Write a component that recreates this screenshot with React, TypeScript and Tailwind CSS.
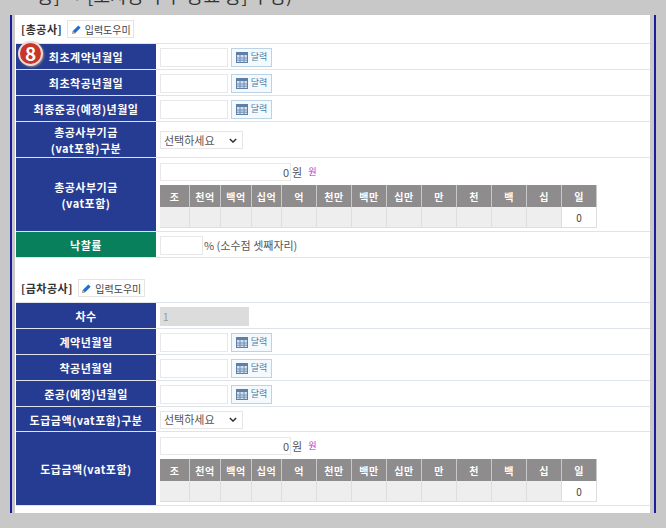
const ff = "font-['Noto_Sans_CJK_KR','Noto_Sans',sans-serif]";

function Pencil({ className }: { className: string }) {
  return (
    <svg viewBox="0 0 12 12" className={className}>
      <path d="M1 11 L2 7.5 L8 1.5 L10.5 4 L4.5 10 Z" fill="#1d6fd0" />
      <path d="M1 11 L2 7.5 L4.5 10 Z" fill="#e8b060" />
    </svg>
  );
}

function Helper() {
  return (
    <span className="ml-[5px] flex h-[18px] w-[67px] items-center justify-center gap-[3px] border border-[#e4e4e4] bg-white text-[10px] font-normal tracking-normal text-[#444]">
      <Pencil className="h-[11px] w-[11px]" />
      입력도우미
    </span>
  );
}

function Label({ children, green }: { children: React.ReactNode; green?: boolean }) {
  return (
    <div
      className={`flex w-[140px] shrink-0 items-center justify-center pt-[1px] text-center text-[11px] font-bold leading-[16px] tracking-[0.5px] text-white ${green ? "bg-[#08805c]" : "bg-[#263c92]"}`}
    >
      <div>{children}</div>
    </div>
  );
}

function Row({ label, green, h, children }: { label: React.ReactNode; green?: boolean; h: string; children: React.ReactNode }) {
  return (
    <div className={`flex border-b border-[#dfe3ea] ${h}`}>
      <Label green={green}>{label}</Label>
      <div className="flex min-w-0 flex-1 flex-col justify-center pl-[4px] pt-[1px]">{children}</div>
    </div>
  );
}

function DateField() {
  return (
    <div className="flex items-center">
      <div className="h-[19px] w-[68px] border border-[#e8e8e8] bg-white" />
      <span className="ml-[3px] flex h-[19px] w-[41px] items-center justify-center gap-[3px] border border-[#bcd3e6] bg-[#f4f9fd] text-[9px] text-[#4a7fa8]">
        <svg viewBox="0 0 12 11" className="h-[11px] w-[12px]">
          <rect x="0.5" y="0.5" width="11" height="10" fill="#cfe0f0" stroke="#5f7fa8" />
          <rect x="0.5" y="0.5" width="11" height="2.5" fill="#5f7fa8" />
          <path d="M4 3v7M8 3v7M1 6h10M1 8.2h10" stroke="#5f7fa8" strokeWidth="0.8" />
        </svg>
        달력
      </span>
    </div>
  );
}

function SelectBox() {
  return (
    <div className="flex h-[18px] w-[83px] items-center justify-between border border-[#e6e6e6] bg-white pl-[3px] pr-[5px] text-[11px] text-[#555]">
      선택하세요
      <svg viewBox="0 0 10 6" className="h-[5px] w-[8px]">
        <path d="M1 1l4 4 4-4" fill="none" stroke="#333" strokeWidth="1.8" />
      </svg>
    </div>
  );
}

const cols: [string, string][] = [
  ["조", "w-[30px]"],
  ["천억", "w-[31px]"],
  ["백억", "w-[31px]"],
  ["십억", "w-[30px]"],
  ["억", "w-[35px]"],
  ["천만", "w-[35px]"],
  ["백만", "w-[35px]"],
  ["십만", "w-[35px]"],
  ["만", "w-[35px]"],
  ["천", "w-[35px]"],
  ["백", "w-[35px]"],
  ["십", "w-[35px]"],
  ["일", "w-[35px]"],
];

function Amount() {
  return (
    <div className="mt-[1px] flex flex-col">
      <div className="flex h-[18px] items-center text-[11px] text-[#555]">
        <div className="flex h-[18px] w-[131px] items-center justify-end border border-[#e8e8e8] bg-white pr-[1px]">0</div>
        <span className="ml-[1px]">원</span>
        <span className="ml-[6px] text-[9px] text-[#b32cd0]">원</span>
      </div>
      <div className="mt-[4px] flex w-[438px]">
        {cols.map(([name, w], i) => (
          <div key={name} className={`flex flex-col ${w} shrink-0`}>
            <div className="flex h-[22px] items-center justify-center border-r border-[#c8c8c8] bg-[#8e8c8c] text-[10px] font-bold tracking-[0.5px] text-white">
              {name}
            </div>
            <div
              className={`flex h-[21px] items-center justify-center border-b border-r border-[#dedede] text-[10px] text-[#444] ${i === 12 ? "bg-white" : "bg-[#eeeeee]"}`}
            >
              {i === 12 ? "0" : ""}
            </div>
          </div>
        ))}
      </div>
    </div>
  );
}

export default function App() {
  return (
    <div className={`${ff} h-[528px] w-[666px] overflow-hidden bg-[#c8c8c8]`}>
      <div className="flex h-[15px] items-end overflow-hidden whitespace-nowrap pl-[37px] text-[18px] leading-[22px] tracking-[0.3px] text-[#333]">
        <span className="mb-[9px]">용] → [조사공식 주 공표 등] 구성)</span>
      </div>
      <div className="ml-[10px] flex h-[498px] w-[646px] border-x-2 border-[#1c1c9c] bg-[#c8c8c8]">
        <div className="ml-[3px] w-[635px] bg-white pl-[1px]">
          <div className="flex h-[28px] items-center pl-[5px] text-[11px] font-bold tracking-[0.5px] text-[#333]">
            [총공사]
            <Helper />
          </div>
          <div className="relative border-t border-[#dfe3ea]">
            <div className="absolute left-[2px] top-[-3px] z-10 flex h-[25px] w-[25px] items-center justify-center rounded-full border-2 border-[#f4d8d0] bg-[#c8352a] text-[19px] font-bold text-white shadow-[1px_1px_2px_#888]">
              8
            </div>
            <Row label="최초계약년월일" h="h-[26px]"><DateField /></Row>
            <Row label="최초착공년월일" h="h-[26px]"><DateField /></Row>
            <Row label="최종준공(예정)년월일" h="h-[26px]"><DateField /></Row>
            <Row label={<>총공사부기금<br />(vat포함)구분</>} h="h-[36px]"><SelectBox /></Row>
            <Row label={<>총공사부기금<br />(vat포함)</>} h="h-[74px]"><Amount /></Row>
            <Row label="낙찰률" green h="h-[26px]">
              <div className="flex items-center text-[11px] text-[#555]">
                <div className="h-[19px] w-[43px] border border-[#e8e8e8] bg-white" />
                <span className="ml-[1px]">% (소수점 셋째자리)</span>
              </div>
            </Row>
          </div>
          <div className="h-[16px]" />
          <div className="flex h-[28px] items-center pl-[5px] text-[11px] font-bold tracking-[0.5px] text-[#333]">
            [금차공사]
            <Helper />
          </div>
          <div className="border-t border-[#dfe3ea]">
            <Row label="차수" h="h-[26px]">
              <div className="flex h-[19px] w-[89px] items-center bg-[#dcdcdc] pl-[3px] text-[10px] text-[#999]">1</div>
            </Row>
            <Row label="계약년월일" h="h-[26px]"><DateField /></Row>
            <Row label="착공년월일" h="h-[26px]"><DateField /></Row>
            <Row label="준공(예정)년월일" h="h-[26px]"><DateField /></Row>
            <Row label="도급금액(vat포함)구분" h="h-[25px]"><SelectBox /></Row>
            <Row label="도급금액(vat포함)" h="h-[74px]"><Amount /></Row>
          </div>
        </div>
      </div>
    </div>
  );
}
